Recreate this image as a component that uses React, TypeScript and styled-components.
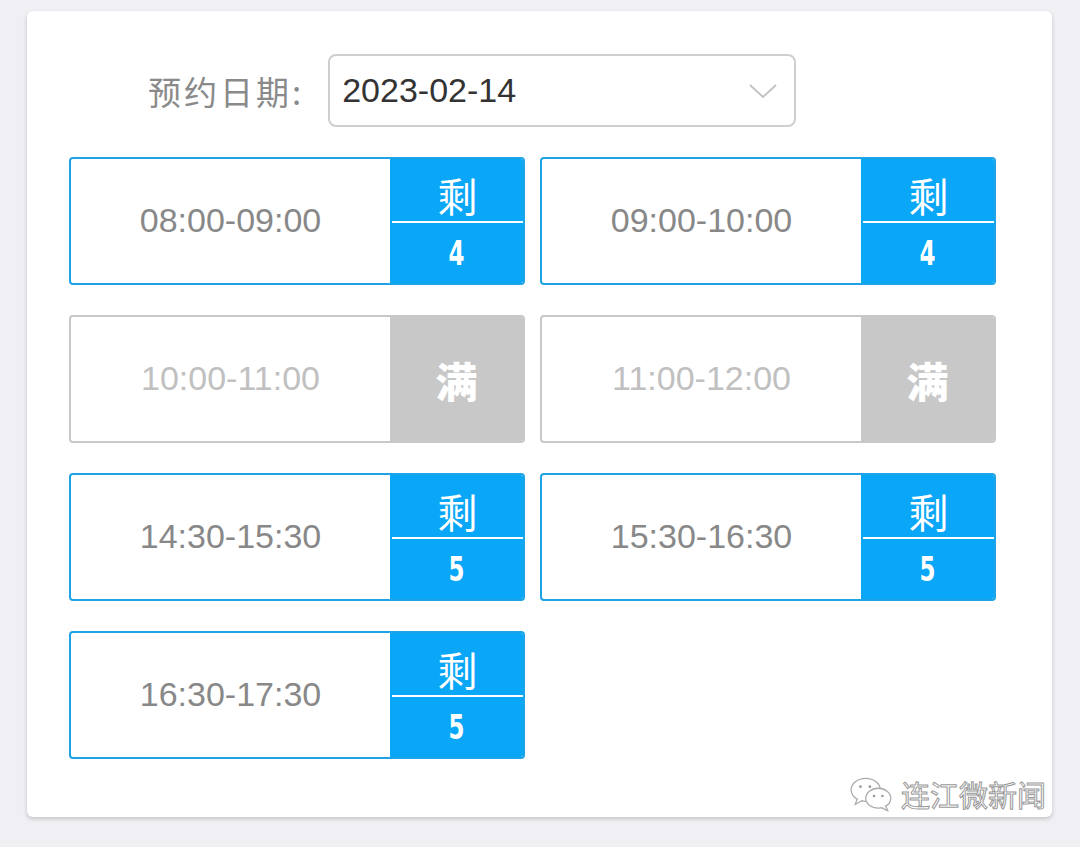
import styled, { createGlobalStyle } from "styled-components";

const Global = createGlobalStyle`
  html, body {
    margin: 0;
    padding: 0;
    background: #efeff4;
    font-family: "Noto Sans CJK SC", "Noto Sans", sans-serif;
  }
`;

const slots = [
    { time: "08:00-09:00", left: 4 },
    { time: "09:00-10:00", left: 4 },
    { time: "10:00-11:00", left: 0 },
    { time: "11:00-12:00", left: 0 },
    { time: "14:30-15:30", left: 5 },
    { time: "15:30-16:30", left: 5 },
    { time: "16:30-17:30", left: 5 },
];

const App = () => {
    return (
        <>
            <Global />
            <Page>
                <Card>
                    <Header>
                        <Label>预约日期:</Label>
                        <Select>
                            <span>2023-02-14</span>
                            <svg width="30" height="18" viewBox="0 0 30 18">
                                <path d="M2 3 L15 15 L28 3" fill="none" stroke="#c4c4c4" strokeWidth="2" />
                            </svg>
                        </Select>
                    </Header>
                    <Grid>
                        {slots.map((s) => (
                            <Slot key={s.time} full={s.left === 0}>
                                <Time full={s.left === 0}>{s.time}</Time>
                                <Side full={s.left === 0}>
                                    {s.left === 0 ? (
                                        <FullMark>满</FullMark>
                                    ) : (
                                        <>
                                            <Remain>剩</Remain>
                                            <Count>{s.left}</Count>
                                        </>
                                    )}
                                </Side>
                            </Slot>
                        ))}
                    </Grid>
                    <Watermark>
                        <svg width="46" height="38" viewBox="0 0 44 36">
                            <ellipse cx="16" cy="14" rx="14" ry="11" fill="#fff" stroke="#aaa" strokeWidth="1.2" />
                            <path d="M8 22 L6 28 L13 24" fill="#fff" stroke="#aaa" strokeWidth="1.2" />
                            <ellipse cx="28" cy="22" rx="12" ry="9.5" fill="#fff" stroke="#aaa" strokeWidth="1.2" />
                            <path d="M35 29 L37 34 L31 31" fill="#fff" stroke="#aaa" strokeWidth="1.2" />
                            <circle cx="11" cy="11" r="1.3" fill="#999" />
                            <circle cx="20" cy="11" r="1.3" fill="#999" />
                            <circle cx="24" cy="20" r="1.2" fill="#999" />
                            <circle cx="32" cy="20" r="1.2" fill="#999" />
                        </svg>
                        <span>连江微新闻</span>
                    </Watermark>
                </Card>
            </Page>
        </>
    );
};

const Page = styled.div`
  width: 1080px;
  height: 847px;
  padding: 11px 28px 0 27px;
  box-sizing: border-box;
`;

const Card = styled.div`
  position: relative;
  width: 1025px;
  height: 806px;
  background: #fff;
  border-radius: 6px;
  box-shadow: 0 2px 4px rgba(0, 0, 0, 0.18);
  box-sizing: border-box;
  padding: 43px 56px 0 42px;
`;

const Header = styled.div`
  display: flex;
  align-items: center;
  padding-left: 79px;
  gap: 24px;
`;

const Label = styled.div`
  font-size: 33px;
  color: #8a8a8a;
  letter-spacing: 3px;
`;

const Select = styled.div`
  width: 468px;
  height: 73px;
  box-sizing: border-box;
  border: 2px solid #cfcfcf;
  border-radius: 8px;
  display: flex;
  align-items: center;
  justify-content: space-between;
  padding: 0 16px 0 12px;
  font-family: "Liberation Sans", Arial, sans-serif;
  font-size: 34px;
  color: #333;
`;

const Grid = styled.div`
  margin-top: 30px;
  display: grid;
  grid-template-columns: 456px 456px;
  column-gap: 15px;
  row-gap: 30px;
`;

const Slot = styled.div<{ full: boolean }>`
  height: 128px;
  box-sizing: border-box;
  border: 2px solid ${(p) => (p.full ? "#c8c8c8" : "#1ea3e6")};
  border-radius: 4px;
  display: flex;
  overflow: hidden;
  background: #fff;
`;

const Time = styled.div<{ full: boolean }>`
  flex: 1;
  display: flex;
  align-items: center;
  justify-content: center;
  font-family: "Liberation Sans", Arial, sans-serif;
  font-size: 34px;
  color: ${(p) => (p.full ? "#c0c0c0" : "#888")};
  padding-bottom: 2px;
`;

const Side = styled.div<{ full: boolean }>`
  width: 133px;
  background: ${(p) => (p.full ? "#c8c8c8" : "#0aa6f7")};
  display: flex;
  flex-direction: column;
  align-items: stretch;
  justify-content: center;
  color: #fff;
`;

const Remain = styled.div`
  height: 64px;
  border-bottom: 2px solid #fff;
  display: flex;
  align-items: flex-end;
  justify-content: center;
  font-size: 40px;
  font-weight: 400;
  line-height: 1;
  padding-bottom: 6px;
  box-sizing: border-box;
  margin-left: 2px;
`;

const Count = styled.div`
  flex: 1;
  display: flex;
  align-items: center;
  justify-content: center;
  font-family: "DejaVu Sans Condensed", "DejaVu Sans", sans-serif;
  font-weight: bold;
  font-size: 34px;
  transform: scaleX(0.75);
`;

const FullMark = styled.div`
  text-align: center;
  font-size: 42px;
  font-weight: 900;
`;

const Watermark = styled.div`
  position: absolute;
  right: 6px;
  bottom: 2px;
  display: flex;
  align-items: center;
  gap: 6px;
  font-size: 29px;
  color: #fff;
  -webkit-text-stroke: 1px #999;
`;

export default App;
